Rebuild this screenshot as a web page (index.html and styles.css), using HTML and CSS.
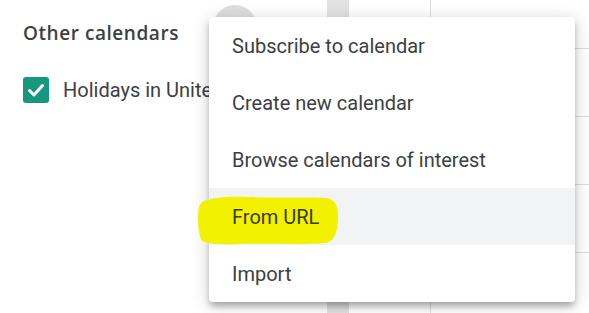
FILE: index.html
```html
<!DOCTYPE html>
<html lang="en">
<head>
<meta charset="utf-8">
<title>Other calendars menu</title>
<link rel="stylesheet" href="styles.css">
</head>
<body>
<div class="page">
  <aside class="sidebar">
    <div class="header">
      <h2 class="title">Other calendars</h2>
      <span class="circle-btn"></span>
    </div>
    <div class="cal-row">
      <span class="checkbox">
        <svg width="26" height="26" viewBox="0 0 26 26"><polyline points="6.5,13.5 11,18 19.5,8.5" fill="none" stroke="#fff" stroke-width="3" stroke-linecap="round" stroke-linejoin="round"/></svg>
      </span>
      <span class="cal-name">Holidays in United States</span>
    </div>
  </aside>
  <div class="scrollbar"></div>
  <div class="gutter"></div>
  <div class="grid">
    <div class="cell first"></div>
    <div class="cell"></div>
    <div class="cell"></div>
    <div class="cell"></div>
    <div class="cell"></div>
  </div>

  <ul class="menu">
    <li class="item"><span class="label">Subscribe to calendar</span></li>
    <li class="item"><span class="label">Create new calendar</span></li>
    <li class="item"><span class="label">Browse calendars of interest</span></li>
    <li class="item active">
      <svg class="marker" width="142" height="50" viewBox="0 0 142 50"><path d="M4 6 C14 1 30 0 50 1 C80 2 110 1 128 2 C136 3 140 8 140 20 C140 32 138 45 128 47 C100 49 70 47 40 48 C24 49 10 48 4 45 C1 40 0 30 0 22 C0 14 1 9 4 6 Z" fill="#f2f200"/></svg>
      <span class="label">From URL</span>
    </li>
    <li class="item"><span class="label">Import</span></li>
  </ul>
</div>
</body>
</html>
```

FILE: styles.css
```css
* { box-sizing: border-box; }

html, body {
  margin: 0;
  padding: 0;
  background: #fff;
}

.page {
  position: relative;
  display: flex;
  width: 589px;
  height: 313px;
  overflow: hidden;
  font-family: Roboto, "Liberation Sans", sans-serif;
  color: #3c4043;
}

.sidebar {
  width: 327px;
  flex: none;
  padding-left: 23px;
}

.header {
  display: grid;
  grid-template-columns: 190px 44px;
  align-items: start;
  padding-top: 5px;
}

.title {
  margin: 16px 0 0;
  font-family: "Open Sans", Roboto, sans-serif;
  font-size: 19px;
  font-weight: 600;
  letter-spacing: 0.55px;
  line-height: 24px;
  color: #3c4043;
  white-space: nowrap;
}

.circle-btn {
  width: 44px;
  height: 44px;
  border-radius: 50%;
  background: #dedede;
}

.cal-row {
  display: flex;
  align-items: center;
  margin-top: 28px;
  gap: 14px;
  white-space: nowrap;
}

.checkbox {
  width: 26px;
  height: 26px;
  flex: none;
  border-radius: 3px;
  background: #16987f;
  display: block;
}

.checkbox svg { display: block; }

.cal-name {
  width: 146px;
  overflow: hidden;
  font-size: 20px;
  line-height: 26px;
  color: #3c4043;
}

.scrollbar {
  width: 22px;
  flex: none;
  background: #e2e2e2;
}

.gutter {
  width: 81px;
  flex: none;
}

.grid {
  flex: 1;
  border-left: 1px solid #dadce0;
  display: flex;
  flex-direction: column;
}

.cell {
  height: 68px;
  flex: none;
  border-top: 1px solid #dadce0;
}

.cell.first {
  height: 48px;
  border-top: none;
}

.menu {
  position: absolute;
  left: 209px;
  top: 17px;
  width: 366px;
  margin: 0;
  padding: 0;
  list-style: none;
  background: #fff;
  border-radius: 4px;
  box-shadow: 0 5px 6px -1px rgba(0,0,0,0.28), 0 3px 16px 2px rgba(0,0,0,0.14);
}

.item {
  position: relative;
  height: 57px;
  display: flex;
  align-items: center;
  padding-left: 23px;
  font-size: 20px;
  color: #3c4043;
}

.label {
  position: relative;
  z-index: 1;
}

.item.active {
  background: #f1f3f4;
}

.item.active .label {
  color: #3a3a10;
}

.marker {
  position: absolute;
  left: -11px;
  top: 8px;
  z-index: 0;
}
```
